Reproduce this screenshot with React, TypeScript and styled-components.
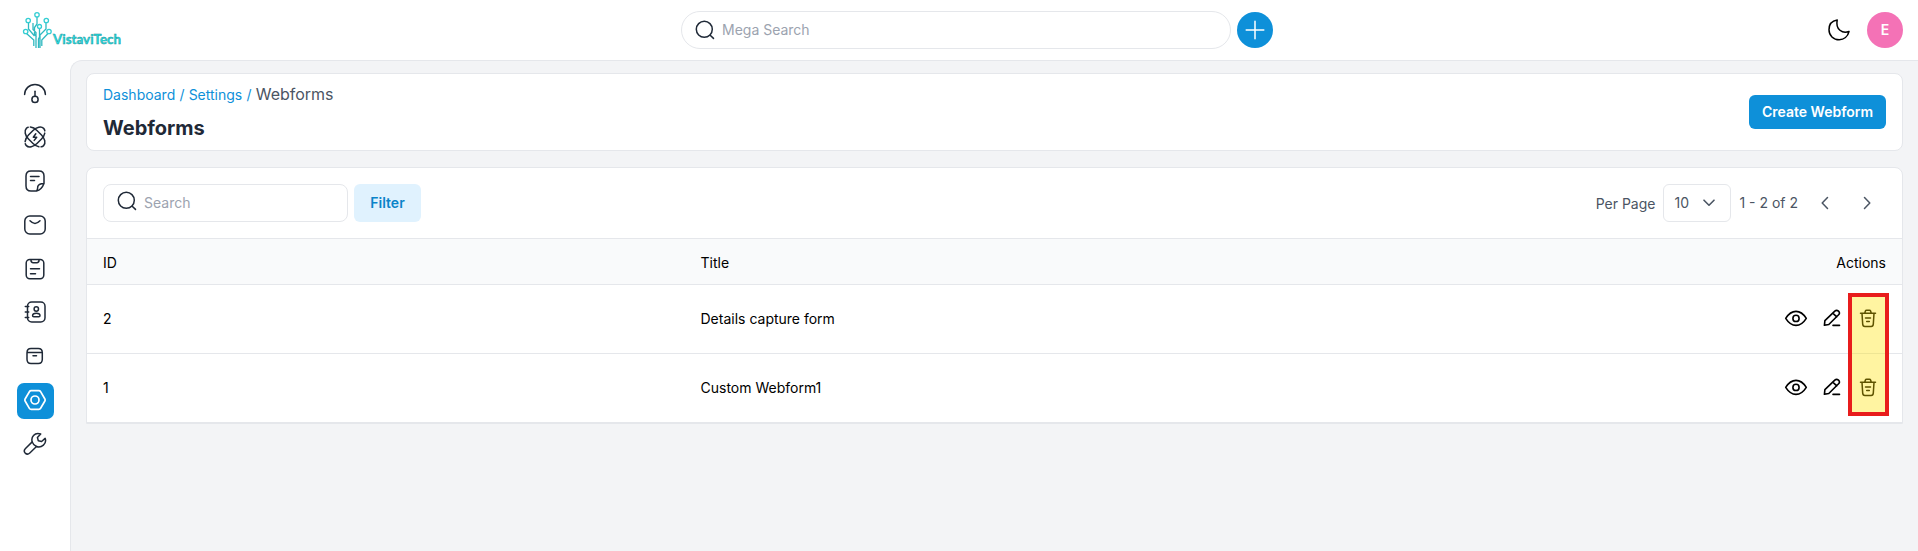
import React from "react";
import styled, { createGlobalStyle } from "styled-components";

const GlobalStyle = createGlobalStyle`
  * { box-sizing: border-box; }
  body { margin: 0; background: #fff; font-family: Inter, "Liberation Sans", sans-serif; font-size: 14px; line-height: 20px; color: #000; }
  button, input { font: inherit; }
`;

const Page = styled.div`
  display: flex;
  flex-direction: column;
  height: 551px;
  overflow: hidden;
`;

const Header = styled.header`
  display: flex;
  align-items: center;
  justify-content: space-between;
  height: 60px;
  flex: none;
  padding: 0 15px 0 22px;
`;

const HeaderSide = styled.div<{ $end?: boolean }>`
  flex: 1;
  display: flex;
  align-items: center;
  gap: 16px;
  justify-content: ${(p) => (p.$end ? "flex-end" : "flex-start")};
`;

const HeaderCenter = styled.div`
  display: flex;
  align-items: center;
  gap: 6px;
  margin-left: 29px;
`;

const SearchField = styled.label<{ $pill?: boolean }>`
  display: flex;
  align-items: center;
  gap: 5px;
  width: ${(p) => (p.$pill ? "550px" : "245px")};
  height: 38px;
  padding: 0 11px;
  border: 1px solid #e5e7eb;
  border-radius: ${(p) => (p.$pill ? "19px" : "8px")};
  background: #fff;
  color: #1f2937;
  svg { margin-top: ${(p) => (p.$pill ? "0" : "-4px")}; }
`;

const SearchInput = styled.input`
  flex: 1;
  min-width: 0;
  border: 0;
  padding: 0;
  outline: none;
  background: transparent;
  color: #4b5563;
  &::placeholder { color: #9ca3af; opacity: 1; }
`;

const Round = styled.button<{ $color: string }>`
  display: flex;
  align-items: center;
  justify-content: center;
  width: 36px;
  height: 36px;
  padding: 0;
  border: 0;
  border-radius: 50%;
  background: ${(p) => p.$color};
  color: #fff;
  font-weight: 600;
`;

const Body = styled.div`
  display: flex;
  flex: 1;
  min-height: 0;
`;

const Sidebar = styled.nav`
  display: flex;
  flex-direction: column;
  gap: 7.8px;
  width: 70px;
  flex: none;
  padding: 16px 16px 0 17px;
`;

const NavItem = styled.a<{ $active?: boolean }>`
  display: flex;
  align-items: center;
  justify-content: center;
  width: 37px;
  height: 36px;
  flex: none;
  padding: 0 1px 1px 0;
  border-radius: 7px;
  color: ${(p) => (p.$active ? "#fff" : "#1f2937")};
  background: ${(p) => (p.$active ? "#0e90d9" : "transparent")};
`;

const Main = styled.main`
  flex: 1;
  display: flex;
  flex-direction: column;
  gap: 16px;
  padding: 12px 15px;
  border-top: 1px solid #e5e7eb;
  border-left: 1px solid #e5e7eb;
  border-top-left-radius: 12px;
  background: #f3f4f6;
`;

const TitleCard = styled.section`
  display: flex;
  align-items: center;
  justify-content: space-between;
  height: 78px;
  padding: 0 16px;
  border: 1px solid #e5e7eb;
  border-radius: 8px;
  background: #fff;
`;

const TitleText = styled.div`
  display: flex;
  flex-direction: column;
  gap: 8px;
`;

const Breadcrumbs = styled.div`
  display: flex;
  align-items: baseline;
  gap: 4.2px;
  height: 24px;
  line-height: 24px;
  color: #0e90d9;
`;

const Current = styled.span`
  font-size: 16px;
  color: #4b5563;
`;

const Heading = styled.h1`
  margin: 0;
  font-size: 20px;
  line-height: 28px;
  font-weight: 700;
  color: #1f2937;
`;

const PrimaryButton = styled.button`
  width: 137px;
  height: 34px;
  padding: 0;
  border: 0;
  border-radius: 6px;
  background: #0e90d9;
  color: #fff;
  font-weight: 600;
`;

const TableCard = styled.section`
  position: relative;
  border: 1px solid #e5e7eb;
  border-radius: 8px 8px 0 0;
  background: #fff;
`;

const Toolbar = styled.div`
  display: flex;
  align-items: center;
  justify-content: space-between;
  height: 71px;
  padding: 0 16px;
  border-bottom: 1px solid #e5e7eb;
`;

const ToolGroup = styled.div`
  display: flex;
  align-items: center;
  gap: 6px;
`;

const FilterButton = styled.button`
  width: 67px;
  height: 38px;
  padding: 0;
  border: 0;
  border-radius: 6px;
  background: #e0f2fe;
  color: #0b84c9;
  font-weight: 600;
`;

const Pager = styled.div`
  display: flex;
  align-items: center;
  padding-right: 1px;
  color: #4b5563;
`;

const PagerLabel = styled.span`
  padding-top: 2px;
  margin-right: 8px;
`;

const PageSize = styled.button`
  display: flex;
  align-items: center;
  justify-content: space-between;
  width: 68px;
  height: 38px;
  margin-right: 8px;
  padding: 0 15px 0 10px;
  border: 1px solid #e5e7eb;
  border-radius: 6px;
  background: #fff;
  color: #4b5563;
`;

const PageRange = styled.span`
  margin-right: 3px;
`;

const PageStep = styled.a`
  display: flex;
  align-items: center;
  justify-content: center;
  width: 36px;
  height: 36px;
  margin-left: 6px;
`;

const Row = styled.div<{ $head?: boolean }>`
  display: grid;
  grid-template-columns: 597.5px 1fr auto;
  align-items: center;
  height: ${(p) => (p.$head ? "46px" : "69px")};
  padding: ${(p) => (p.$head ? "2px 16px 0" : "0 16px")};
  border-bottom: 1px solid #e5e7eb;
  background: ${(p) => (p.$head ? "#f9fafb" : "#fff")};
`;

const Actions = styled.div`
  display: flex;
  gap: 12px;
  padding: 0 6px 2px 0;
`;

const Highlight = styled.div`
  position: absolute;
  top: 125px;
  right: 13px;
  width: 41px;
  height: 123px;
  border: 4px solid #e81c1c;
  background: rgba(255, 225, 0, 0.37);
  background-clip: padding-box;
`;

function Icon({ children, size = 24, w = 1.5 }: { children: React.ReactNode; size?: number; w?: number }) {
  return (
    <svg width={size} height={size} viewBox="0 0 24 24" fill="none" stroke="currentColor" strokeWidth={w} strokeLinecap="round" strokeLinejoin="round">
      {children}
    </svg>
  );
}

const SearchIcon = () => (
  <Icon>
    <circle cx="11.3" cy="11.3" r="8" />
    <path d="M17.2 17.2l3.3 3.2" />
  </Icon>
);

const navIcons: React.ReactNode[] = [
  <>
    <path d="M1.6 12.6a10.4 10.2 0 0 1 20.8 0" />
    <circle cx="12" cy="17.4" r="3.1" />
    <path d="M12 9.2v5" />
  </>,
  <>
    <rect x="-.2" y="6" width="24.4" height="12" rx="9" ry="6" transform="rotate(45 12 12)" strokeDasharray="21 2.200 27 2.200 8 0" />
    <rect x="-.2" y="6" width="24.400" height="12" rx="9" ry="6" transform="rotate(-45 12 12)" strokeDasharray="21 2.200 27 2.200 8 0" />
    <path d="M12.800 8.800L10.300 12.200h3.400l-2.500 3.200" />
  </>,
  <>
    <path d="M13.500 22H8c-3.500 0-5-1.500-5-5V7c0-3.500 1.500-5 5-5h8c3.500 0 5 1.500 5 5v7.500c-1.500 4-3.500 6.500-7.500 7.500 1.500-1.500 1-3 1.300-4.500.4-2 1.700-2.800 6.200-3" />
    <path d="M7.500 7.500h8.500M7.500 11.500h4" />
  </>,
  <>
    <rect x="1.800" y="3" width="20.400" height="18" rx="5" />
    <path d="M7 7.800c3.300 3.500 6.700 3.500 10 0" />
  </>,
  <>
    <rect x="3.200" y="2.500" width="17.600" height="19.200" rx="3.600" />
    <path d="M8 2.700v.6c0 1.600.7 2.400 2.200 2.400h3.600c1.500 0 2.200-.8 2.200-2.400v-.6M7.500 11.700h9M7.500 16.700h5" />
  </>,
  <>
    <rect x="4.500" y="2" width="17.500" height="20" rx="4.200" />
    <path d="M2.300 6.500h3.400M2.300 12h3.400M2.300 17.500h3.400" />
    <circle cx="13.300" cy="9" r="2.200" />
    <path d="M9.600 15.800c0-1.600 1.600-2.500 3.700-2.500s3.700.9 3.700 2.500c0 .8-.4 1-1.200 1h-5c-.8 0-1.200-.2-1.200-1z" />
  </>,
  <>
    <path d="M4 8.700c0-3 1.300-4.200 4-4.200h7.300c2.700 0 4 1.200 4 4.200v6.600c0 3-1.300 4.300-4 4.300H8c-2.700 0-4-1.300-4-4.300zM4.200 8.500h15M10 11.700h3.500" />
  </>,
  <>
    <path strokeWidth="1.700" d="M8.200 2.700h7.600c.8 0 1.400.3 1.800 1l4.300 7.300c.4.700.4 1.300 0 2l-4.300 7.300c-.4.700-1 1-1.800 1H8.200c-.8 0-1.400-.3-1.800-1L2.100 13c-.4-.7-.4-1.300 0-2l4.300-7.300c.4-.7 1-1 1.800-1z" />
    <circle cx="12" cy="12" r="4" strokeWidth="1.700" />
  </>,
  <>
    <path d="M17.700 2c-2.500-.9-5.500-.4-7.200 1.500-1.600 1.700-1.900 4.300-1.300 6.400l-6.700 6.600c-1.500 1.500-1.400 3.400-.3 4.600 1.300 1.200 3.200 1.200 4.600-.1l6.700-6.500c2.200.8 5 .3 6.900-1.400 2-1.800 2.600-4.500 1.700-6.700l-3.500 3.100-3.300-.8-.9-3.300z" />
    <path d="M9.200 9.900c.6 2 2 3.600 4.300 4.600" />
  </>,
];

function Logo() {
  return (
    <svg width="102" height="38" viewBox="0 0 102 38">
      <g fill="none" stroke="#2fb9c0" strokeWidth="1.300">
        <path d="M14 37V21.500l-3-3V12M16.500 37V28l1-2V18M15 6v7l-2.500 3.500V23l2 3M6.500 12v6l6 7M24 12v6l-6 6v13M4.500 22.500l7.300 6.500v6M26 22.500l-6.200 6.500v6" />
        <g stroke="#35ced3">
          <circle cx="15" cy="3.800" r="2.200" />
          <circle cx="6.200" cy="9.500" r="2.200" />
          <circle cx="24.300" cy="9.500" r="2.200" />
          <circle cx="17.500" cy="15.500" r="2" />
          <circle cx="3.700" cy="20.500" r="2.200" />
          <circle cx="27" cy="20.500" r="2.200" />
        </g>
      </g>
      <text x="31" y="32.500" fontFamily="Lato, sans-serif" fontSize="13" fontWeight="700" fill="#25dde0" stroke="#258d95" strokeWidth=".4" textLength="68" lengthAdjust="spacingAndGlyphs">
        VistaviTech
      </text>
    </svg>
  );
}

function RowActions() {
  return (
    <Actions>
      <Icon w={1.6}>
        <path d="M1.700 12.400c2.700-4.300 6-7 10.300-7s7.600 2.700 10.300 7c-2.700 4.300-6 7-10.300 7s-7.600-2.700-10.300-7z" />
        <circle cx="12" cy="12.400" r="3.100" />
      </Icon>
      <Icon w={1.6}>
        <path d="M4.400 19.300l.5-4.600L14.800 5.200c1.200-1.200 2.400-1.200 3.700 0s1.300 2.300.1 3.500L8.800 18.500zM12.800 7.100l3.900 3.800M13 19.400h6.500" />
      </Icon>
      <Icon>
        <path d="M4.500 7.200h15M8.800 7l.6-2c.2-.6.5-.8 1.200-.8h2.800c.7 0 1 .2 1.200.8l.6 2M6 7.400l.7 10.700c.1 1.600.7 2.300 2.200 2.300h6.200c1.500 0 2.100-.7 2.200-2.300L18 7.400M9.500 11.900h5M10.700 15.400h2.600" />
      </Icon>
    </Actions>
  );
}

const forms = [
  { id: 2, title: "Details capture form" },
  { id: 1, title: "Custom Webform1" },
];

export default function App() {
  return (
    <Page>
      <GlobalStyle />
      <Header>
        <HeaderSide>
          <Logo />
        </HeaderSide>
        <HeaderCenter>
          <SearchField $pill>
            <SearchIcon />
            <SearchInput placeholder="Mega Search" />
          </SearchField>
          <Round $color="#0e90d9">
            <Icon>
              <path d="M3.200 12h17.600M12 3.200v17.600" />
            </Icon>
          </Round>
        </HeaderCenter>
        <HeaderSide $end>
          <Icon>
            <path d="M10.200 2.100C4.500 3 2 7.200 2 11.700c0 5.800 4.500 10.100 10.200 10.100 4.700 0 8.600-3.300 9.800-8.300-6.500 2.500-13.700-2-11.800-11.400z" />
          </Icon>
          <Round $color="#f472b6">E</Round>
        </HeaderSide>
      </Header>
      <Body>
        <Sidebar>
          {navIcons.map((icon, i) => (
            <NavItem key={i} $active={i === 7}>
              <Icon>{icon}</Icon>
            </NavItem>
          ))}
        </Sidebar>
        <Main>
          <TitleCard>
            <TitleText>
              <Breadcrumbs>
                <span>Dashboard</span>
                <span>/</span>
                <span>Settings</span>
                <span>/</span>
                <Current>Webforms</Current>
              </Breadcrumbs>
              <Heading>Webforms</Heading>
            </TitleText>
            <PrimaryButton>Create Webform</PrimaryButton>
          </TitleCard>
          <TableCard>
            <Toolbar>
              <ToolGroup>
                <SearchField>
                  <SearchIcon />
                  <SearchInput placeholder="Search" />
                </SearchField>
                <FilterButton>Filter</FilterButton>
              </ToolGroup>
              <Pager>
                <PagerLabel>Per Page</PagerLabel>
                <PageSize>
                  10
                  <svg width="12" height="8" viewBox="0 0 12 8" fill="none" stroke="currentColor" strokeWidth="1.600" strokeLinecap="round" strokeLinejoin="round">
                    <path d="M1 1.200l5 5 5-5" />
                  </svg>
                </PageSize>
                <PageRange>1 - 2 of 2</PageRange>
                <PageStep>
                  <Icon>
                    <path d="M14.500 6.500L9.200 12l5.300 5.500" />
                  </Icon>
                </PageStep>
                <PageStep>
                  <Icon>
                    <path d="M9.500 6.500l5.300 5.500-5.300 5.500" />
                  </Icon>
                </PageStep>
              </Pager>
            </Toolbar>
            <Row $head>
              <span>ID</span>
              <span>Title</span>
              <span>Actions</span>
            </Row>
            {forms.map((form) => (
              <Row key={form.id}>
                <span>{form.id}</span>
                <span>{form.title}</span>
                <RowActions />
              </Row>
            ))}
            <Highlight />
          </TableCard>
        </Main>
      </Body>
    </Page>
  );
}
